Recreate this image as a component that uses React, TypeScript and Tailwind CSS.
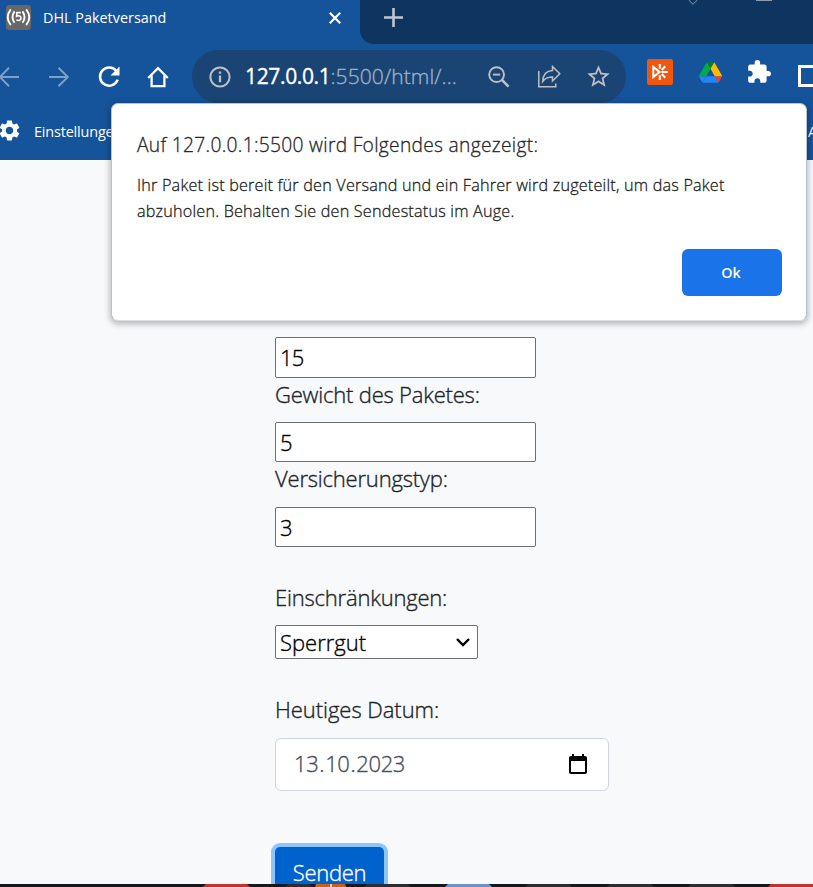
import React from 'react';
import { MdExtension, MdSettings, MdStarBorder } from 'react-icons/md';

function TabStrip() {
  return (
    <div className="flex h-11 shrink-0 bg-[#15539a]">
      <div className="flex h-[35px] w-[360px] items-center pl-[6px]">
        <svg className="h-[25px] w-[25px] shrink-0" viewBox="0 0 25 25" fill="none" stroke="#fff" strokeWidth="1.9">
          <rect width="25" height="25" rx="3" fill="#686868" stroke="none" />
          <path d="M4.8 4.4Q-1.4 12.3 4.8 20.2M8.5 6.4Q4.5 12.2 8.5 17.8M20.2 4.4Q26.4 12.3 20.2 20.2M16.5 6.4Q20.5 12.2 16.5 17.8" />
          <path d="M14.8 7.6h-3.9l-.3 3.6c2.2-1 4.4-.1 4.4 2 0 2.2-2.6 2.8-4.6 1.7" strokeWidth="1.6" />
        </svg>
        <span className="ml-3 text-[14.4px] whitespace-nowrap text-white">DHL Paketversand</span>
        <svg className="mr-[19px] ml-auto h-3 w-3" viewBox="0 0 12 12" stroke="#fff" strokeWidth="2.2">
          <path d="M.8.8l10.4 10.4M11.2.8.8 11.2" />
        </svg>
      </div>
      <div className="flex flex-1 items-start rounded-bl-[14px] bg-[#0d355f]">
        <svg className="mt-2 ml-6 h-[19px] w-[19px]" viewBox="0 0 19 19" stroke="#bdc8d5" strokeWidth="2.6">
          <path d="M9.5 0v19M0 9.5h19" />
        </svg>
        <svg className="ml-[285px] h-[5px] w-[10px]" viewBox="0 0 10 5" fill="none" stroke="#899cb1" strokeWidth="1">
          <path d="M.5-.2 5 4.3 9.5-.2" />
        </svg>
        <div className="ml-[58px] h-px w-4 bg-[#899cb1]" />
      </div>
    </div>
  );
}

function AddressBar() {
  return (
    <div className="ml-[22px] flex h-[53px] w-[434px] shrink-0 items-center rounded-full bg-[#1a4473] pl-[17px]">
      <svg className="h-[22px] w-[22px] shrink-0" viewBox="0 0 22 22" fill="none" stroke="#bcc0c6" strokeWidth="2">
        <circle cx="11" cy="11" r="9.6" />
        <path d="M11 9.6v6.6M11 5.6v2.2" strokeWidth="2.3" />
      </svg>
      <span className="ml-[14px] w-[230px] shrink-0 text-[21px] font-light whitespace-nowrap text-[#9fb1c6] [-webkit-text-stroke:0.35px_currentColor]">
        <span className="font-normal tracking-[-0.35px] text-white">127.0.0.1</span>
        <span className="tracking-[0.1px]">:5500/html/...</span>
      </span>
      <svg className="ml-[13px] h-[22px] w-[22px] shrink-0" viewBox="0 0 22 22" fill="none" stroke="#bcc0c6" strokeWidth="1.9">
        <circle cx="8.6" cy="8.6" r="7.4" />
        <path d="M5 8.6h7.2" />
        <path d="m14 14 6.6 6.6" strokeWidth="2.6" />
      </svg>
      <svg className="ml-[27px] h-[23px] w-[25px] shrink-0" viewBox="0 0 25 23" fill="none" stroke="#bcc0c6" strokeWidth="1.5">
        <path d="M1.800 6v15.700h17V18.5" />
        <path d="M15.5 1.5v4C9.500 5.800 6 9.800 5.700 16.500c2.500-3.500 5.500-4.500 9.800-4.500v4l7.300-7.300z" />
      </svg>
      <MdStarBorder className="ml-[23px] h-[27px] w-[27px] shrink-0 text-[#bcc0c6]" />
    </div>
  );
}

function OrangeExtensionIcon() {
  return (
    <svg className="h-[26px] w-[26px] shrink-0" viewBox="0 0 26 26" fill="none" stroke="#fff" strokeWidth="2.1">
      <rect width="26" height="26" rx="2" fill="#f0560f" stroke="none" />
      <path d="M6.300 8v10l6.200-5zM14.500 13H20.800M12.800 5v4.800M12.800 16.200V21M14.800 11l3.400-3.700M14.800 15l3.400 3.700" />
    </svg>
  );
}

function DriveIcon() {
  return (
    <svg className="h-[21px] w-[23px] shrink-0" viewBox="0 0 87.3 78">
      <path d="m6.6 66.85 3.85 6.65c.8 1.4 1.95 2.5 3.3 3.3l13.75-23.8H0c0 1.55.4 3.1 1.2 4.5z" fill="#2684fc" />
      <path d="M43.65 25 29.9 1.2c-1.35.8-2.5 1.9-3.3 3.3L1.2 48.5A9 9 0 0 0 0 53h27.5z" fill="#00ac47" />
      <path d="M73.55 76.8c1.35-.8 2.5-1.9 3.3-3.3l1.6-2.75L86.1 57.5c.8-1.4 1.2-2.95 1.2-4.5H59.8l5.85 11.5z" fill="#ea4335" />
      <path d="M43.65 25 57.4 1.2C56.05.4 54.5 0 52.9 0H34.4c-1.6 0-3.15.45-4.5 1.2z" fill="#00832d" />
      <path d="M59.8 53H27.5L13.75 76.8c1.35.8 2.9 1.2 4.5 1.2h50.8c1.6 0 3.15-.45 4.5-1.2z" fill="#2684fc" />
      <path d="M73.4 26.5 60.7 4.5c-.8-1.4-1.95-2.5-3.3-3.3L43.65 25 59.8 53h27.45c0-1.55-.4-3.1-1.2-4.5z" fill="#ffba00" />
    </svg>
  );
}

function Toolbar() {
  return (
    <div className="flex h-[60px] shrink-0 items-start pt-[6px]">
      <div className="flex h-[53px] w-[170px] shrink-0 items-center">
        <svg className="h-5 w-[19px] shrink-0" viewBox="0 0 19 20" fill="none" stroke="#7f9fc6" strokeWidth="2">
          <path d="M19 10H0M9 .8-.2 10 9 19.2" />
        </svg>
        <svg className="ml-[30px] h-5 w-5 shrink-0" viewBox="0 0 20 20" fill="none" stroke="#7f9fc6" strokeWidth="2">
          <path d="M0 10h18.8M9.5.8 18.8 10l-9.3 9.2" />
        </svg>
        <svg className="ml-[29px] h-[22px] w-[22px] shrink-0" viewBox="0 0 22 22" fill="none" stroke="#fff" strokeWidth="2.5">
          <path d="M18.3 5A9.1 9.1 0 1 0 19.7 13.6" />
          <path d="M21.5.5v9h-9z" fill="#fff" stroke="none" />
        </svg>
        <svg className="ml-[27px] h-[22px] w-[22px] shrink-0" viewBox="0 0 22 22" fill="none" stroke="#fff" strokeWidth="2.3">
          <path d="M1.2 12 11 2.2 20.8 12M4.6 9.5v10.7h12.8V9.5" />
        </svg>
      </div>
      <AddressBar />
      <div className="ml-[21px] flex h-[44px] shrink-0 items-center">
        <OrangeExtensionIcon />
        <div className="w-[26px]" />
        <DriveIcon />
        <MdExtension className="ml-[24px] h-[26px] w-[26px] text-white" />
        <div className="mt-2 ml-[26px] h-[22px] w-6 shrink-0 border-[3px] border-white" />
      </div>
    </div>
  );
}

function BookmarksBar() {
  return (
    <div className="flex h-14 shrink-0 items-center text-[14.4px] tracking-[-0.15px] text-white">
      <MdSettings className="mb-[3px] -ml-[3px] h-[25px] w-[25px]" />
      <span className="ml-3">Einstellungen</span>
      <span className="mr-[-4px] ml-auto">A</span>
    </div>
  );
}

function AlertDialog() {
  return (
    <div className="absolute top-[103px] left-[111px] flex h-[218px] w-[696px] flex-col rounded-[7px] border border-[#b7c4d6] border-b-[#dcdee1] bg-white px-[25px] shadow-[0_2px_6px_1px_rgba(0,0,0,0.28)]">
      <h1 className="mt-[27px] text-[19.2px] leading-[28px] font-light tracking-[0.3px] whitespace-nowrap text-[#25282c] [-webkit-text-stroke:0.3px_currentColor]">
        Auf 127.0.0.1:5500 wird Folgendes angezeigt:
      </h1>
      <p className="mt-[13px] text-[16.2px] leading-[26px] font-light tracking-[0.2px] whitespace-nowrap text-[#1d1f22] [-webkit-text-stroke:0.3px_currentColor]">
        Ihr Paket ist bereit für den Versand und ein Fahrer wird zugeteilt, um das Paket
        <br />
        abzuholen. Behalten Sie den Sendestatus im Auge.
      </p>
      <button className="mt-[25px] mr-[-1px] h-[47px] w-[100px] self-end rounded-[6px] bg-[#1a73e8] pr-[2px] text-[14.4px] font-semibold text-white">
        Ok
      </button>
    </div>
  );
}

const inputClass = 'flex w-[261px] shrink-0 items-center rounded-[2px] border border-[#6f6f6f] bg-white pl-1 tracking-[-0.8px] text-black';

function ShippingForm() {
  return (
    <form className="flex flex-col items-start pt-[177px] pl-[275px] text-[22px] leading-[33px] font-light text-[#212529] [-webkit-text-stroke:0.35px_currentColor]">
      <div className={inputClass + ' h-[41px]'}>15</div>
      <label className="mb-[11px] tracking-[-0.2px]">Gewicht des Paketes:</label>
      <div className={inputClass + ' h-[40px]'}>5</div>
      <label className="mb-[12px] tracking-[-0.2px]">Versicherungstyp:</label>
      <div className={inputClass + ' h-[40px]'}>3</div>
      <label className="mt-[34px] mb-[11px] tracking-[-0.2px]">Einschränkungen:</label>
      <div className="flex h-[34px] w-[203px] items-center justify-between rounded-[2px] border border-[#6f6f6f] bg-white pr-[7px] pl-1 text-black">
        <span className="mt-[1px]">Sperrgut</span>
        <svg className="h-[9px] w-[14px]" viewBox="0 0 14 9" fill="none" stroke="#000" strokeWidth="2.4">
          <path d="M1 1l6 6 6-6" />
        </svg>
      </div>
      <label className="mt-[34px] mb-[12px] tracking-[-0.05px]">Heutiges Datum:</label>
      <div className="flex h-[53px] w-[334px] items-center justify-between rounded-[6px] border border-[#ced4da] bg-white pr-[21px] pl-[18px] text-[#495057]">
        <span className="mb-[2px] tracking-[-0.4px]">
          13<span className="mx-[1px]">.</span>10<span className="mx-[1px]">.</span>2023
        </span>
        <svg className="mb-[1px] h-5 w-[18px]" viewBox="0 0 18 20">
          <path d="M16 2h-1V0h-2v2H5V0H3v2H2C.9 2 0 2.9 0 4v14c0 1.1.9 2 2 2h14c1.1 0 2-.9 2-2V4c0-1.1-.9-2-2-2zm0 16H2V7h14z" />
        </svg>
      </div>
      <button
        type="button"
        className="mt-[56px] h-[51px] w-[109px] rounded-[5px] bg-[#0062cc] tracking-[-0.3px] text-white shadow-[0_0_0_4px_#8fc4fd]"
      >
        Senden
      </button>
    </form>
  );
}

function Taskbar() {
  return (
    <div className="absolute inset-x-0 bottom-0 h-[3px] bg-[#17181b]">
      <svg className="block h-[3px] w-[813px]" viewBox="0 0 813 3">
        <path d="M203 3l3-3h41l3 3zM768 3l3-3h42v3z" fill="#bd352c" />
        <path d="M315 3l1-3h29l1 3z" fill="#c96212" />
        <path d="M330 0h2v3h-2z" fill="#d8d4cf" />
        <path d="M445 3l3-3h41l3 3z" fill="#6e90c8" />
        <path d="M285 3l3-3h22l2 3zM364 3l3-3h41l3 3zM525 3l3-3h41l3 3zM607 3l3-3h41l3 3zM688 3l3-3h41l3 3z" fill="#2c2e31" />
      </svg>
    </div>
  );
}

export default function App() {
  return (
    <div className="relative h-[887px] w-[813px] overflow-hidden bg-[#f8f9fb] font-['Open_Sans','Noto_Sans',sans-serif]">
      <header className="flex h-40 flex-col overflow-hidden bg-[#15539a]">
        <TabStrip />
        <Toolbar />
        <BookmarksBar />
      </header>
      <main>
        <ShippingForm />
      </main>
      <AlertDialog />
      <Taskbar />
    </div>
  );
}
